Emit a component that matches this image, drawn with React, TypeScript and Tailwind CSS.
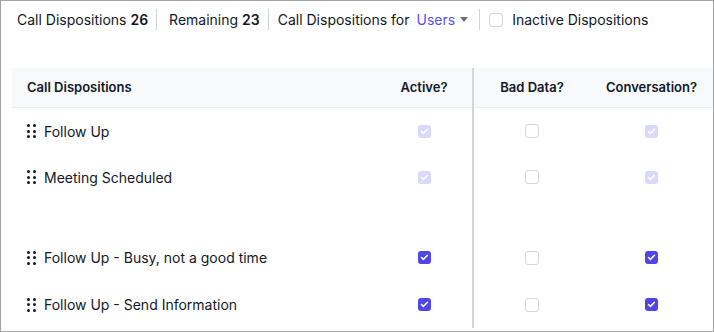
import { Check } from 'lucide-react';

type Row = { name: string; active: boolean; badData: boolean; conversation: boolean; locked?: boolean };

const ROWS: Row[] = [
  { name: 'Follow Up', active: true, badData: false, conversation: true, locked: true },
  { name: 'Meeting Scheduled', active: true, badData: false, conversation: true, locked: true },
  { name: 'Follow Up - Busy, not a good time', active: true, badData: false, conversation: true },
  { name: 'Follow Up - Send Information', active: true, badData: false, conversation: true },
];

function Box({ checked, locked }: { checked: boolean; locked?: boolean }) {
  if (!checked) {
    return <span className="block w-[14px] h-[14px] rounded-[3px] border border-[#d5d7df] bg-white" />;
  }
  return (
    <span
      className={`flex items-center justify-center w-[13px] h-[13px] rounded-[3px] ${
        locked ? 'bg-[#d9d8fd]' : 'bg-[#4f46e5]'
      }`}
    >
      <Check size={9} strokeWidth={4} className="text-white" />
    </span>
  );
}

function Handle() {
  return (
    <span className="grid grid-cols-2 gap-x-[3px] gap-y-[2.5px] w-[9px]">
      {[0, 1, 2, 3, 4, 5].map((i) => (
        <span key={i} className="w-[3px] h-[3px] rounded-full bg-[#111827]" />
      ))}
    </span>
  );
}

export default function App() {
  return (
    <div className="w-[714px] h-[332px] border border-[#a3a3a3] bg-white overflow-hidden font-['Inter',sans-serif] text-[#111827]">
      {/* 상단 요약 */}
      <div className="flex items-center h-[37px] pl-4 text-[14px]">
        <span>
          Call Dispositions <b className="font-semibold">26</b>
        </span>
        <span className="ml-[8px] w-px h-[21px] bg-[#d1d5db]" />
        <span className="ml-[12px]">
          Remaining <b className="font-semibold">23</b>
        </span>
        <span className="ml-[8px] w-px h-[21px] bg-[#d1d5db]" />
        <span className="ml-[9px]">Call Dispositions for</span>
        <span className="ml-[7px] text-[#5b50f0]">Users</span>
        <span className="ml-[5px] w-0 h-0 border-l-[4.5px] border-r-[4.5px] border-t-[5px] border-l-transparent border-r-transparent border-t-[#6b7280]" />
        <span className="ml-[11px] w-px h-[21px] bg-[#d1d5db]" />
        <span className="ml-[9px] w-[14px] h-[14px] rounded-[3px] border border-[#d1d5db]" />
        <span className="ml-[9px]">Inactive Dispositions</span>
      </div>

      {/* 테이블 */}
      <div className="mt-[30px] ml-[11px] grid grid-cols-[364px_96px_2px_116px_1fr] text-[14px]">
        <div className="h-[40px] flex items-center pl-[15px] bg-[#f8f9fa] border-b border-[#eceef1] text-[13px] font-semibold">
          Call Dispositions
        </div>
        <div className="h-[40px] flex items-center justify-center bg-[#f8f9fa] border-b border-[#eceef1] text-[13px] font-semibold">
          Active?
        </div>
        <div className="row-span-7 bg-[#d4d6de]" />
        <div className="h-[40px] flex items-center justify-center bg-[#f8f9fa] border-b border-[#eceef1] text-[13px] font-semibold">
          Bad Data?
        </div>
        <div className="h-[40px] flex items-center justify-center bg-[#f8f9fa] border-b border-[#eceef1] text-[13px] font-semibold">
          Conversation?
        </div>

        {ROWS.map((r, i) => {
          const h = i < 2 ? 'h-[46px]' : 'h-[47px]';
          return (
            <div key={r.name} className="contents">
              {i === 2 && <div className="col-span-2 h-[34px]" />}
              {i === 2 && <div className="col-span-2 h-[34px]" />}
              <div className={`${h} flex items-center gap-[8px] pl-[15px]`}>
                <Handle />
                <span>{r.name}</span>
              </div>
              <div className={`${h} flex items-center justify-center`}>
                <Box checked={r.active} locked={r.locked} />
              </div>
              <div className={`${h} flex items-center justify-center`}>
                <Box checked={r.badData} />
              </div>
              <div className={`${h} flex items-center justify-center`}>
                <Box checked={r.conversation} locked={r.locked} />
              </div>
            </div>
          );
        })}
      </div>
    </div>
  );
}
